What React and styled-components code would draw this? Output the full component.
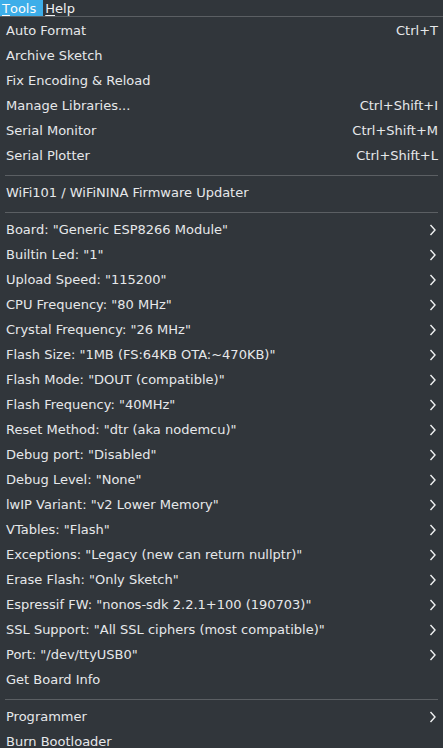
import React from "react";
import styled, { createGlobalStyle } from "styled-components";

const GlobalStyle = createGlobalStyle`
  html, body {
    margin: 0;
    padding: 0;
    background: #31363b;
  }
  body {
    font-family: "DejaVu Sans", "Noto Sans", sans-serif;
    color: #eff0f1;
    overflow: hidden;
  }
`;

const Frame = styled.div`
  width: 443px;
  height: 748px;
  overflow: hidden;
  background: #31363b;
`;

const MenuBar = styled.div`
  display: flex;
  height: 16px;
  border-bottom: 1px solid #5b5f63;
  font-size: 13px;
`;

const BarItem = styled.div`
  display: flex;
  align-items: center;
  height: 16px;
  padding: ${(p) => (p.$active ? "0 7px 0 2px" : "0 2px 0 2px")};
  background: ${(p) => (p.$active ? "#3daee9" : "transparent")};
  color: ${(p) => (p.$active ? "#fcfcfc" : "#eff0f1")};

  u {
    text-decoration-thickness: 1px;
    text-underline-offset: 2px;
  }
`;

const Menu = styled.div`
  display: flex;
  flex-direction: column;
  padding-top: 1px;
  font-size: 13px;
`;

const Row = styled.div`
  display: flex;
  align-items: center;
  height: 25px;
  padding: 0 5px 0 6px;
  white-space: nowrap;
  color: #e6e8ea;
`;

const Label = styled.span`
  flex: 1;
`;

const Shortcut = styled.span`
  color: #e6e8ea;
`;

const Chevron = styled.svg`
  width: 8px;
  height: 12px;
  margin-right: 1px;
`;

const Separator = styled.div`
  height: 12px;
  display: flex;
  flex-direction: column;
  padding: 0 5px;
  &::before {
    content: "";
    margin-top: 7px;
    height: 1px;
    background: #5b5f63;
  }
`;

const Arrow = () => (
  <Chevron viewBox="0 0 8 12">
    <path d="M1.5 1 L6 6 L1.5 11" fill="none" stroke="#eff0f1" strokeWidth="1.4" />
  </Chevron>
);

const sections = [
  [
    ["Auto Format", "Ctrl+T"],
    ["Archive Sketch"],
    ["Fix Encoding & Reload"],
    ["Manage Libraries...", "Ctrl+Shift+I"],
    ["Serial Monitor", "Ctrl+Shift+M"],
    ["Serial Plotter", "Ctrl+Shift+L"],
  ],
  [["WiFi101 / WiFiNINA Firmware Updater"]],
  [
    ['Board: "Generic ESP8266 Module"', ">"],
    ['Builtin Led: "1"', ">"],
    ['Upload Speed: "115200"', ">"],
    ['CPU Frequency: "80 MHz"', ">"],
    ['Crystal Frequency: "26 MHz"', ">"],
    ['Flash Size: "1MB (FS:64KB OTA:~470KB)"', ">"],
    ['Flash Mode: "DOUT (compatible)"', ">"],
    ['Flash Frequency: "40MHz"', ">"],
    ['Reset Method: "dtr (aka nodemcu)"', ">"],
    ['Debug port: "Disabled"', ">"],
    ['Debug Level: "None"', ">"],
    ['lwIP Variant: "v2 Lower Memory"', ">"],
    ['VTables: "Flash"', ">"],
    ['Exceptions: "Legacy (new can return nullptr)"', ">"],
    ['Erase Flash: "Only Sketch"', ">"],
    ['Espressif FW: "nonos-sdk 2.2.1+100 (190703)"', ">"],
    ['SSL Support: "All SSL ciphers (most compatible)"', ">"],
    ['Port: "/dev/ttyUSB0"', ">"],
    ["Get Board Info"],
  ],
  [["Programmer", ">"], ["Burn Bootloader"]],
];

export default function App() {
  return (
    <Frame>
      <GlobalStyle />
      <MenuBar>
        <BarItem $active>
          <u>T</u>ools
        </BarItem>
        <BarItem>
          <u>H</u>elp
        </BarItem>
      </MenuBar>
      <Menu>
        {sections.map((items, i) => (
          <React.Fragment key={i}>
            {i > 0 && <Separator />}
            {items.map(([label, extra]) => (
              <Row key={label}>
                <Label>{label}</Label>
                {extra === ">" ? <Arrow /> : extra && <Shortcut>{extra}</Shortcut>}
              </Row>
            ))}
          </React.Fragment>
        ))}
      </Menu>
    </Frame>
  );
}
